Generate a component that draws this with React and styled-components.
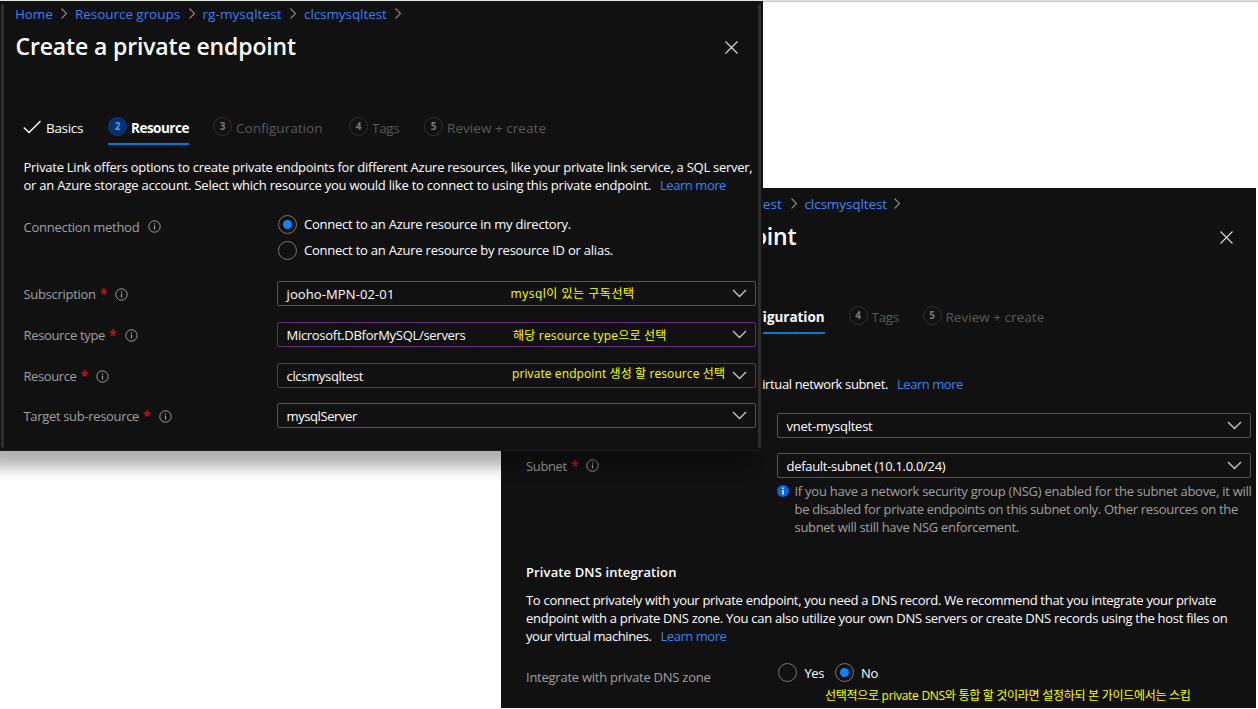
import React from 'react';
import styled, { createGlobalStyle, css } from 'styled-components';

const GlobalStyle = createGlobalStyle`
  * { box-sizing: border-box; }
  body {
    margin: 0;
    background: #fff;
    overflow: hidden;
    font-family: 'Open Sans', 'Noto Sans CJK KR', sans-serif;
    font-size: 13px;
    line-height: 18px;
    color: #fff;
  }
`;

const Canvas = styled.main`
  position: relative;
  width: 1258px;
  height: 709px;
  overflow: hidden;
  border-top: 1px solid #dfe5df;

  &::before {
    content: '';
    display: block;
    height: 1px;
    background: #c6c6c6;
  }
`;

const Blade = styled.section`
  position: absolute;
  display: flex;
  flex-direction: column;
  background: #111;
`;

const ResourceBlade = styled(Blade)`
  left: 0;
  top: 0;
  z-index: 2;
  width: 763px;
  height: 450px;
  padding: 4px 7px 0 15.5px;
  border-bottom: 1px solid #1c1c1c;
  box-shadow: -14px 16px 14px rgba(0, 0, 0, 0.31);

  &::before,
  &::after {
    content: '';
    position: absolute;
    top: 3px;
    bottom: 2px;
    width: 3px;
    background: #2e2e2e;
    border-radius: 2px;
  }
  &::before { left: 1px; }
  &::after { right: 2px; }
`;

const ConfigBlade = styled(Blade)`
  left: 501px;
  top: 187px;
  z-index: 1;
  width: 755px;
  height: 520px;
  padding: 7px 5px 0 15px;
`;

const Text = styled.span`
  white-space: nowrap;
  letter-spacing: ${(p) => p.$ls || 0}px;
`;

const Link = styled.a`
  color: #3b82f6;
  white-space: nowrap;
  letter-spacing: -0.45px;
  margin-left: ${(p) => p.$gap || 0}px;
`;

const Breadcrumbs = styled.nav`
  display: flex;
  align-items: center;
  height: 18px;
  font-size: 13.5px;
  margin-left: ${(p) => p.$indent || -0.5}px;
`;

const Crumb = styled.a`
  color: ${(p) => (p.$bright ? '#3f86ff' : '#3b7ff0')};
  width: ${(p) => p.$w}px;
  white-space: nowrap;
  letter-spacing: ${(p) => p.$ls}px;
`;

const CrumbArrow = styled.svg`
  width: 22px;
  height: 14px;
  flex: none;
  fill: none;
  stroke: #8a8a8a;
  stroke-width: 1.1;
`;

const Header = styled.header`
  display: flex;
  justify-content: space-between;
  align-items: center;
  height: 32px;
  margin-top: 8px;
  padding-left: ${(p) => p.$left || 0}px;
  padding-right: 18px;
`;

const Title = styled.h1`
  margin: -2px 0 0;
  font-size: 23px;
  line-height: 32px;
  font-weight: 600;
  letter-spacing: -0.14px;
  white-space: nowrap;
`;

const CloseIcon = styled.svg`
  width: 13px;
  height: 13px;
  stroke: #d6d6d6;
  stroke-width: 1.2;
`;

const Tabs = styled.div`
  display: flex;
  align-items: flex-start;
  height: 29px;
  margin: ${(p) => p.$top || 53}px 0 0 ${(p) => p.$indent}px;
`;

const Tab = styled.div`
  display: flex;
  align-items: center;
  height: 29px;
  padding-bottom: 6px;
  font-size: 13.5px;
  width: ${(p) => p.$w}px;
  margin-right: ${(p) => p.$gap || 0}px;
  color: ${(p) => (p.$muted ? '#5a5a5a' : '#fff')};
  ${(p) => p.$active && css`
    font-weight: 700;
    border-bottom: 2px solid #0c78c9;
    padding-bottom: 4px;
  `}
`;

const Step = styled.span`
  display: flex;
  align-items: center;
  justify-content: center;
  flex: none;
  width: 19px;
  height: 19px;
  margin: -2px 4px 0 0;
  border-radius: 50%;
  border: 1px solid ${(p) => (p.$active ? '#0c3f80' : '#303030')};
  background: ${(p) => (p.$active ? '#06316e' : 'transparent')};
  color: ${(p) => (p.$active ? '#4c9df5' : '#7a7a7a')};
  font-size: 10px;
  font-weight: 700;
  line-height: 17px;
`;

const CheckIcon = styled.svg`
  width: 19px;
  height: 14px;
  flex: none;
  margin: -2px 4px 0 0;
  fill: none;
  stroke: #fff;
  stroke-width: 1.4;
`;

const Paragraph = styled.p`
  margin: ${(p) => p.$top}px 0 0 ${(p) => p.$indent}px;
  display: flex;
  flex-direction: column;
  line-height: 18px;
`;

const Row = styled.div`
  display: flex;
  align-items: center;
  height: 25px;
  margin-top: ${(p) => p.$top}px;
  padding-left: ${(p) => p.$indent}px;
`;

const Label = styled.label`
  display: flex;
  align-items: center;
  flex: none;
  width: ${(p) => p.$w}px;
  padding-top: ${(p) => p.$drop || 0}px;
  color: #a0a0a0;
`;

const Required = styled.span`
  color: #d0121f;
  font-size: 14px;
  font-weight: 600;
  width: 8px;
  margin-left: 4px;
`;

const InfoIcon = styled.svg`
  width: 13px;
  height: 13px;
  flex: none;
  margin-left: ${(p) => p.$gap}px;
  fill: none;
  stroke: #a0a0a0;
`;

const RadioGroup = styled.div`
  display: flex;
  flex-direction: column;
  gap: 6px;
  padding-left: 262px;
  margin-top: -25px;
`;

const InlineRadios = styled.div`
  display: flex;
  margin-top: -8px;
`;

const RadioOption = styled.label`
  display: flex;
  align-items: center;
  height: 20px;
  gap: 7.5px;
  margin-right: 10.5px;
`;

const Radio = styled.span`
  display: flex;
  align-items: center;
  justify-content: center;
  width: 19px;
  height: 19px;
  flex: none;
  border: 1px solid #777;
  border-radius: 50%;

  &::after {
    content: '';
    width: 9px;
    height: 9px;
    border-radius: 50%;
    background: ${(p) => (p.$on ? '#0a84ff' : 'transparent')};
  }
`;

const Select = styled.div`
  position: relative;
  flex: 1;
  display: flex;
  align-items: center;
  justify-content: space-between;
  height: 25px;
  padding: 0 8px 0 8.5px;
  border: 1px solid ${(p) => (p.$edited ? '#652a7a' : '#565656')};
  border-radius: 2px;
`;

const Chevron = styled.svg`
  width: 15px;
  height: 9px;
  fill: none;
  stroke: #c8c8c8;
  stroke-width: 1.3;
`;

const Note = styled.span`
  position: absolute;
  left: ${(p) => p.$x}px;
  top: ${(p) => p.$y}px;
  color: #ff0;
  font-size: 12px;
  line-height: 18px;
  white-space: nowrap;
  letter-spacing: ${(p) => p.$ls}px;
`;

const Notice = styled.div`
  display: flex;
  margin: 4px 0 0 261px;
  color: #a0a0a0;
`;

const NoticeIcon = styled.svg`
  width: 12px;
  height: 12px;
  flex: none;
  margin: 3px 5.5px 0 0;
`;

const NoticeText = styled.div`
  display: flex;
  flex-direction: column;
`;

const SectionTitle = styled.h2`
  margin: 27px 0 0 10px;
  font-size: 13px;
  line-height: 18px;
  font-weight: 600;
  letter-spacing: 0.12px;
`;

const Arrow = () => (
  <CrumbArrow viewBox="0 0 22 14"><path d="M8.5 1.5 13.5 6.5 8.5 11.5" /></CrumbArrow>
);
const Close = () => (
  <CloseIcon viewBox="0 0 13 13"><path d="M.5.5 12.5 12.5M12.5.5.5 12.5" /></CloseIcon>
);
const Info = ({ gap }) => (
  <InfoIcon viewBox="0 0 13 13" $gap={gap}>
    <circle cx="6.5" cy="6.5" r="5.7" />
    <path d="M6.5 5.5V9.6M6.5 3.3V4.5" strokeWidth="1.2" />
  </InfoIcon>
);

const Dropdown = ({ value, ls, edited, children }) => (
  <Select $edited={edited}>
    <Text $ls={ls}>{value}</Text>
    {children}
    <Chevron viewBox="0 0 15 9"><path d="M1 1 7.5 7.5 14 1" /></Chevron>
  </Select>
);

const FieldLabel = ({ children, ls, required, info = true, w = 253.5, drop = 1 }) => (
  <Label $w={w} $drop={drop}>
    <Text $ls={ls}>{children}</Text>
    {required && <Required>*</Required>}
    {info && <Info gap={required ? 7.5 : 9} />}
  </Label>
);

const StepTab = ({ n, children, ls, active, w, gap }) => (
  <Tab $active={active} $muted={!active} $w={w} $gap={gap}>
    <Step $active={active}>{n}</Step>
    <Text $ls={ls}>{children}</Text>
  </Tab>
);

function CreateResource() {
  return (
    <ResourceBlade>
      <Breadcrumbs>
        <Crumb $w={38} $ls={-0.1}>Home</Crumb><Arrow />
        <Crumb $w={105.5} $ls={-0.05}>Resource groups</Crumb><Arrow />
        <Crumb $w={79.5} $ls={0.07}>rg-mysqltest</Crumb><Arrow />
        <Crumb $w={83} $ls={-0.08}>clcsmysqltest</Crumb><Arrow />
      </Breadcrumbs>
      <Header>
        <Title>Create a private endpoint</Title>
        <Close />
      </Header>
      <Tabs $indent={7.5}>
        <Tab $w={60} $gap={25}>
          <CheckIcon viewBox="0 0 19 14"><path d="M.8 7.5 6 12.5 17.5 1" /></CheckIcon>
          <Text $ls={-0.33}>Basics</Text>
        </Tab>
        <StepTab n="2" active w={81} gap={24} ls={-0.5}>Resource</StepTab>
        <StepTab n="3" w={110} gap={26} ls={0.03}>Configuration</StepTab>
        <StepTab n="4" w={51} gap={24} ls={-0.3}>Tags</StepTab>
        <StepTab n="5" w={124} ls={0.05}>Review + create</StepTab>
      </Tabs>
      <Paragraph $top={13} $indent={8}>
        <Text $ls={-0.263}>Private Link offers options to create private endpoints for different Azure resources, like your private link service, a SQL server,</Text>
        <Text $ls={-0.215}>
          or an Azure storage account. Select which resource you would like to connect to using this private endpoint.
          <Link $gap={9}>Learn more</Link>
        </Text>
      </Paragraph>
      <Row $top={20} $indent={8}>
        <FieldLabel ls={-0.26} drop={0}>Connection method</FieldLabel>
      </Row>
      <RadioGroup>
        <RadioOption><Radio $on /><Text $ls={-0.23}>Connect to an Azure resource in my directory.</Text></RadioOption>
        <RadioOption><Radio /><Text $ls={-0.23}>Connect to an Azure resource by resource ID or alias.</Text></RadioOption>
      </RadioGroup>
      <Row $top={21} $indent={8}>
        <FieldLabel ls={-0.3} required>Subscription</FieldLabel>
        <Dropdown value="jooho-MPN-02-01" ls={0.11}>
          <Note $x={232.5} $y={3} $ls={0.52}>mysql이 있는 구독선택</Note>
        </Dropdown>
      </Row>
      <Row $top={16} $indent={8}>
        <FieldLabel ls={-0.34} required>Resource type</FieldLabel>
        <Dropdown value="Microsoft.DBforMySQL/servers" ls={-0.293} edited>
          <Note $x={235} $y={4} $ls={0.2}>해당 resource type으로 선택</Note>
        </Dropdown>
      </Row>
      <Row $top={16} $indent={8}>
        <FieldLabel ls={-0.4} required>Resource</FieldLabel>
        <Dropdown value="clcsmysqltest" ls={-0.321} edited>
          <Note $x={234} $y={1} $ls={0.1}>private endpoint 생성 할 resource 선택</Note>
        </Dropdown>
      </Row>
      <Row $top={15} $indent={8}>
        <FieldLabel ls={-0.33} required>Target sub-resource</FieldLabel>
        <Dropdown value="mysqlServer" ls={-0.4} />
      </Row>
    </ResourceBlade>
  );
}

function Configuration() {
  return (
    <ConfigBlade>
      <Breadcrumbs $indent={187}>
        <Crumb $bright $w={79.5} $ls={0.05}>rg-mysqltest</Crumb><Arrow />
        <Crumb $bright $w={81} $ls={-0.1}>clcsmysqltest</Crumb><Arrow />
      </Breadcrumbs>
      <Header $left={181}>
        <Title>endpoint</Title>
        <Close />
      </Header>
      <Tabs $indent={193} $top={52}>
        <StepTab n="3" active w={115.5} gap={24} ls={-0.05}>Configuration</StepTab>
        <StepTab n="4" w={50} gap={24} ls={-0.3}>Tags</StepTab>
        <StepTab n="5" w={124} ls={0.03}>Review + create</StepTab>
      </Tabs>
      <Paragraph $top={41} $indent={240}>
        <Text $ls={-0.363}>virtual network subnet.<Link $gap={9}>Learn more</Link></Text>
      </Paragraph>
      <Row $top={20} $indent={10}>
        <Label $w={251} />
        <Dropdown value="vnet-mysqltest" ls={-0.237} />
      </Row>
      <Row $top={15} $indent={10}>
        <FieldLabel ls={-0.36} w={251} drop={0} required>Subnet</FieldLabel>
        <Dropdown value="default-subnet (10.1.0.0/24)" ls={-0.29} />
      </Row>
      <Notice>
        <NoticeIcon viewBox="0 0 12 12">
          <circle cx="6" cy="6" r="6" fill="#0a62e6" />
          <path d="M6 5V9.6M6 2.4V4" stroke="#fff" strokeWidth="1.5" />
        </NoticeIcon>
        <NoticeText>
          <Text $ls={-0.259}>If you have a network security group (NSG) enabled for the subnet above, it will</Text>
          <Text $ls={-0.309}>be disabled for private endpoints on this subnet only. Other resources on the</Text>
          <Text $ls={-0.31}>subnet will still have NSG enforcement.</Text>
        </NoticeText>
      </Notice>
      <SectionTitle>Private DNS integration</SectionTitle>
      <Paragraph $top={10} $indent={10}>
        <Text $ls={-0.295}>To connect privately with your private endpoint, you need a DNS record. We recommend that you integrate your private</Text>
        <Text $ls={-0.278}>endpoint with a private DNS zone. You can also utilize your own DNS servers or create DNS records using the host files on</Text>
        <Text $ls={-0.395}>your virtual machines.<Link $gap={9}>Learn more</Link></Text>
      </Paragraph>
      <Row $top={19} $indent={10}>
        <FieldLabel ls={-0.251} w={252} info={false} drop={0}>Integrate with private DNS zone</FieldLabel>
        <InlineRadios>
          <RadioOption><Radio /><Text $ls={-0.4}>Yes</Text></RadioOption>
          <RadioOption><Radio $on /><Text $ls={-0.3}>No</Text></RadioOption>
        </InlineRadios>
      </Row>
      <Note $x={324} $y={499} $ls={-0.286}>선택적으로 private DNS와 통합 할 것이라면 설정하되 본 가이드에서는 스킵</Note>
    </ConfigBlade>
  );
}

export default function App() {
  return (
    <>
      <GlobalStyle />
      <Canvas>
        <CreateResource />
        <Configuration />
      </Canvas>
    </>
  );
}
